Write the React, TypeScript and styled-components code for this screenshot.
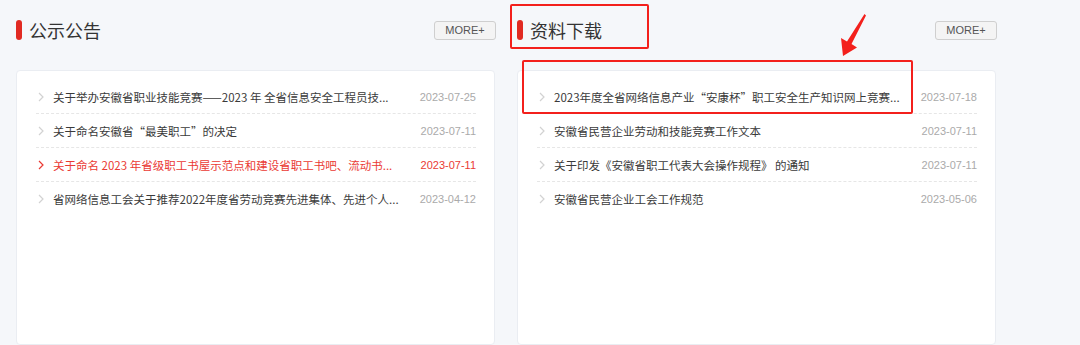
import React from "react";
import styled, { createGlobalStyle } from "styled-components";

const GlobalStyle = createGlobalStyle`
  html, body { margin: 0; padding: 0; background: #f5f7fa; }
  body { font-family: "Noto Sans CJK SC", "Noto Sans", sans-serif; }
`;

const Page = styled.div`
  position: relative;
  width: 1080px;
  height: 345px;
  overflow: hidden;
  background: #f5f7fa;
  display: flex;
  gap: 22px;
  padding-left: 16px;
  box-sizing: border-box;
`;

const Column = styled.section`
  width: 479px;
  display: flex;
  flex-direction: column;
`;

const Header = styled.div`
  height: 60px;
  margin-bottom: 10px;
  display: flex;
  align-items: center;
  justify-content: space-between;
  box-sizing: border-box;
`;

const TitleWrap = styled.div`
  display: flex;
  align-items: center;
  gap: 7px;
  margin-top: -1px;
`;

const Bar = styled.span`
  width: 6px;
  height: 20px;
  border-radius: 3px;
  background: #e12a22;
`;

const Title = styled.h2`
  margin: 0;
  font-size: 18px;
  font-weight: 400;
  color: #333;
  line-height: 24px;
`;

const MoreButton = styled.button`
  width: 62px;
  height: 19px;
  margin-right: -1px;
  padding: 0;
  border: 1px solid #cfcfcf;
  border-radius: 3px;
  background: #f4f4f4;
  color: #555;
  font-family: "Liberation Sans", Arial, sans-serif;
  font-size: 11px;
  line-height: 17px;
  text-align: center;
`;

const Card = styled.div`
  flex: 1;
  background: #fff;
  border: 1px solid #eaedf2;
  border-radius: 4px;
  padding: 9px 18px 0 19px;
`;

const List = styled.ul`
  list-style: none;
  margin: 0;
  padding: 0;
`;

const Row = styled.li<{ $active?: boolean }>`
  height: 34px;
  display: flex;
  align-items: center;
  border-bottom: 1px dashed #e6e6e6;
  box-sizing: border-box;
  color: ${(p) => (p.$active ? "#ea3a33" : "#3a3a3a")};
  &:last-child { border-bottom: none; }
`;

const Chevron = styled.svg`
  width: 8px;
  height: 10px;
  margin-left: 1px;
  margin-right: 8px;
  flex: none;
`;

const ItemText = styled.span`
  font-size: 11.5px;
  white-space: nowrap;
  line-height: 16px;
`;

const DateText = styled.span<{ $active?: boolean }>`
  margin-left: auto;
  font-family: "Liberation Sans", Arial, sans-serif;
  font-size: 11px;
  color: ${(p) => (p.$active ? "#ea3a33" : "#aaa")};
`;

const Highlight = styled.div<{ $x: number; $y: number; $w: number; $h: number }>`
  position: absolute;
  left: ${(p) => p.$x}px;
  top: ${(p) => p.$y}px;
  width: ${(p) => p.$w}px;
  height: ${(p) => p.$h}px;
  border: 2px solid #f3201c;
  border-radius: 2px;
  box-sizing: border-box;
  pointer-events: none;
`;

const ArrowSvg = styled.svg`
  position: absolute;
  left: 0;
  top: 0;
  pointer-events: none;
`;

type Item = { text: string; date: string; active?: boolean };

const notices: Item[] = [
  { text: "关于举办安徽省职业技能竞赛——2023 年 全省信息安全工程员技...", date: "2023-07-25" },
  { text: "关于命名安徽省“最美职工”的决定", date: "2023-07-11" },
  { text: "关于命名 2023 年省级职工书屋示范点和建设省职工书吧、流动书...", date: "2023-07-11", active: true },
  { text: "省网络信息工会关于推荐2022年度省劳动竞赛先进集体、先进个人...", date: "2023-04-12" },
];

const downloads: Item[] = [
  { text: "2023年度全省网络信息产业“安康杯”职工安全生产知识网上竞赛...", date: "2023-07-18" },
  { text: "安徽省民营企业劳动和技能竞赛工作文本", date: "2023-07-11" },
  { text: "关于印发《安徽省职工代表大会操作规程》 的通知", date: "2023-07-11" },
  { text: "安徽省民营企业工会工作规范", date: "2023-05-06" },
];

const Arrow = ({ active }: { active?: boolean }) => (
  <Chevron viewBox="0 0 8 10">
    <path d="M2 1 L6 5 L2 9" fill="none" stroke={active ? "#ea3a33" : "#d2d2d2"} strokeWidth="1.2" />
  </Chevron>
);

const Panel = ({ title, items }: { title: string; items: Item[] }) => (
  <Column>
    <Header>
      <TitleWrap>
        <Bar />
        <Title>{title}</Title>
      </TitleWrap>
      <MoreButton>MORE+</MoreButton>
    </Header>
    <Card>
      <List>
        {items.map((it, i) => (
          <Row key={i} $active={it.active}>
            <Arrow active={it.active} />
            <ItemText>{it.text}</ItemText>
            <DateText $active={it.active}>{it.date}</DateText>
          </Row>
        ))}
      </List>
    </Card>
  </Column>
);

export default function App() {
  return (
    <>
      <GlobalStyle />
      <Page>
        <Panel title="公示公告" items={notices} />
        <Panel title="资料下载" items={downloads} />
        <Highlight $x={510} $y={4} $w={139} $h={45} />
        <Highlight $x={522} $y={60} $w={391} $h={54} />
        <ArrowSvg width="1080" height="345" viewBox="0 0 1080 345">
          <polygon
            points="864.5,14 866,15.5 851.5,44 857,47.5 843,56 841,38 847,41.5"
            fill="#f3201c"
          />
        </ArrowSvg>
      </Page>
    </>
  );
}
